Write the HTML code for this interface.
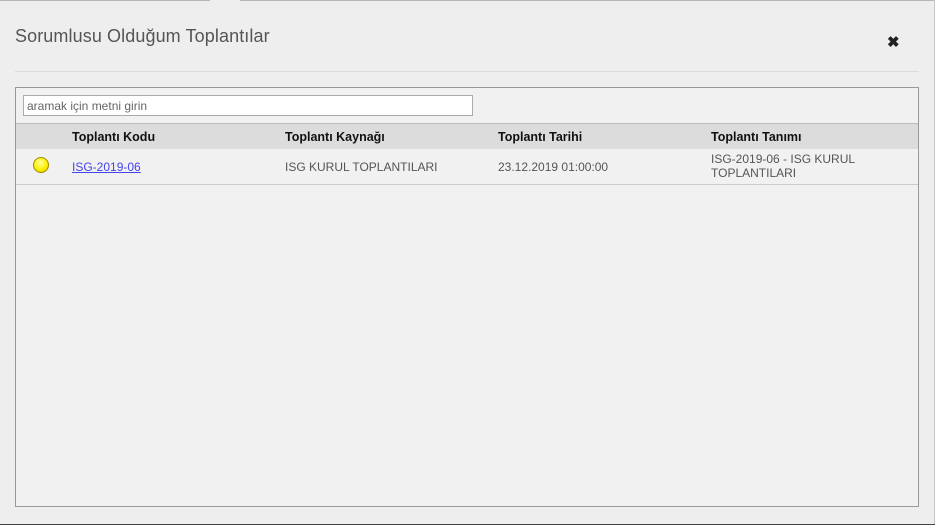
<!DOCTYPE html>
<html><head><meta charset="utf-8"><style>
*{margin:0;padding:0;box-sizing:border-box}
body{width:935px;height:525px;background:#eeeeee;font-family:"Liberation Sans",sans-serif;position:relative;overflow:hidden}
.top{position:absolute;top:0;left:0;width:935px;height:1px;background:#b5b5b5}
.gap{position:absolute;top:0;left:210px;width:30px;height:1px;background:#eee}
.right{position:absolute;top:0;right:0;width:1px;height:525px;background:#c8c8c8}
.bot{position:absolute;bottom:0;left:0;width:935px;height:1px;background:#444}
h1{position:absolute;left:15px;top:26px;font-size:18px;font-weight:normal;color:#555;letter-spacing:0.1px}
.x{position:absolute;left:887px;top:33px;font-size:15px;font-weight:bold;color:#222}
.hr{position:absolute;left:15px;top:71px;width:904px;height:1px;background:#dcdcdc}
.panel{position:absolute;left:15px;top:87px;width:904px;height:420px;background:#f1f1f1;border:1px solid #999}
input{position:absolute;left:7px;top:7px;width:450px;height:21px;border:1px solid #aaa;background:#fff;font:12px "Liberation Sans",sans-serif;color:#666;padding-left:3px}
.hd{position:absolute;left:0;top:35px;width:902px;height:26px;background:#dcdcdc;border-top:1px solid #bbb}
.row{position:absolute;left:0;top:61px;width:902px;height:36px;border-bottom:1px solid #ccc}
.c{position:absolute;font-size:12px}
.hd .c{top:6px;font-weight:bold;color:#111;font-size:12.5px}
.row .c{color:#555}
a{color:#4444ee}
.dot{position:absolute;left:17px;top:8px;width:16px;height:16px;border-radius:50%;background:radial-gradient(circle at 45% 35%,#ffffa0,#ffee00 55%,#d8c000);border:1px solid #a08c00}
</style></head><body>
<div class="top"></div><div class="gap"></div><div class="right"></div><div class="bot"></div>
<h1>Sorumlusu Olduğum Toplantılar</h1>
<div class="x">✖</div>
<div class="hr"></div>
<div class="panel">
<input value="aramak için metni girin">
<div class="hd"><span class="c" style="left:56px">Toplantı Kodu</span><span class="c" style="left:269px">Toplantı Kaynağı</span><span class="c" style="left:482px">Toplantı Tarihi</span><span class="c" style="left:695px">Toplantı Tanımı</span></div>
<div class="row"><div class="dot"></div>
<span class="c" style="left:56px;top:11px"><a href="#">ISG-2019-06</a></span>
<span class="c" style="left:269px;top:11px">ISG KURUL TOPLANTILARI</span>
<span class="c" style="left:482px;top:11px">23.12.2019 01:00:00</span>
<span class="c" style="left:695px;top:3px;line-height:14px">ISG-2019-06 - ISG KURUL<br>TOPLANTILARI</span>
</div>
</div>
</body></html>
